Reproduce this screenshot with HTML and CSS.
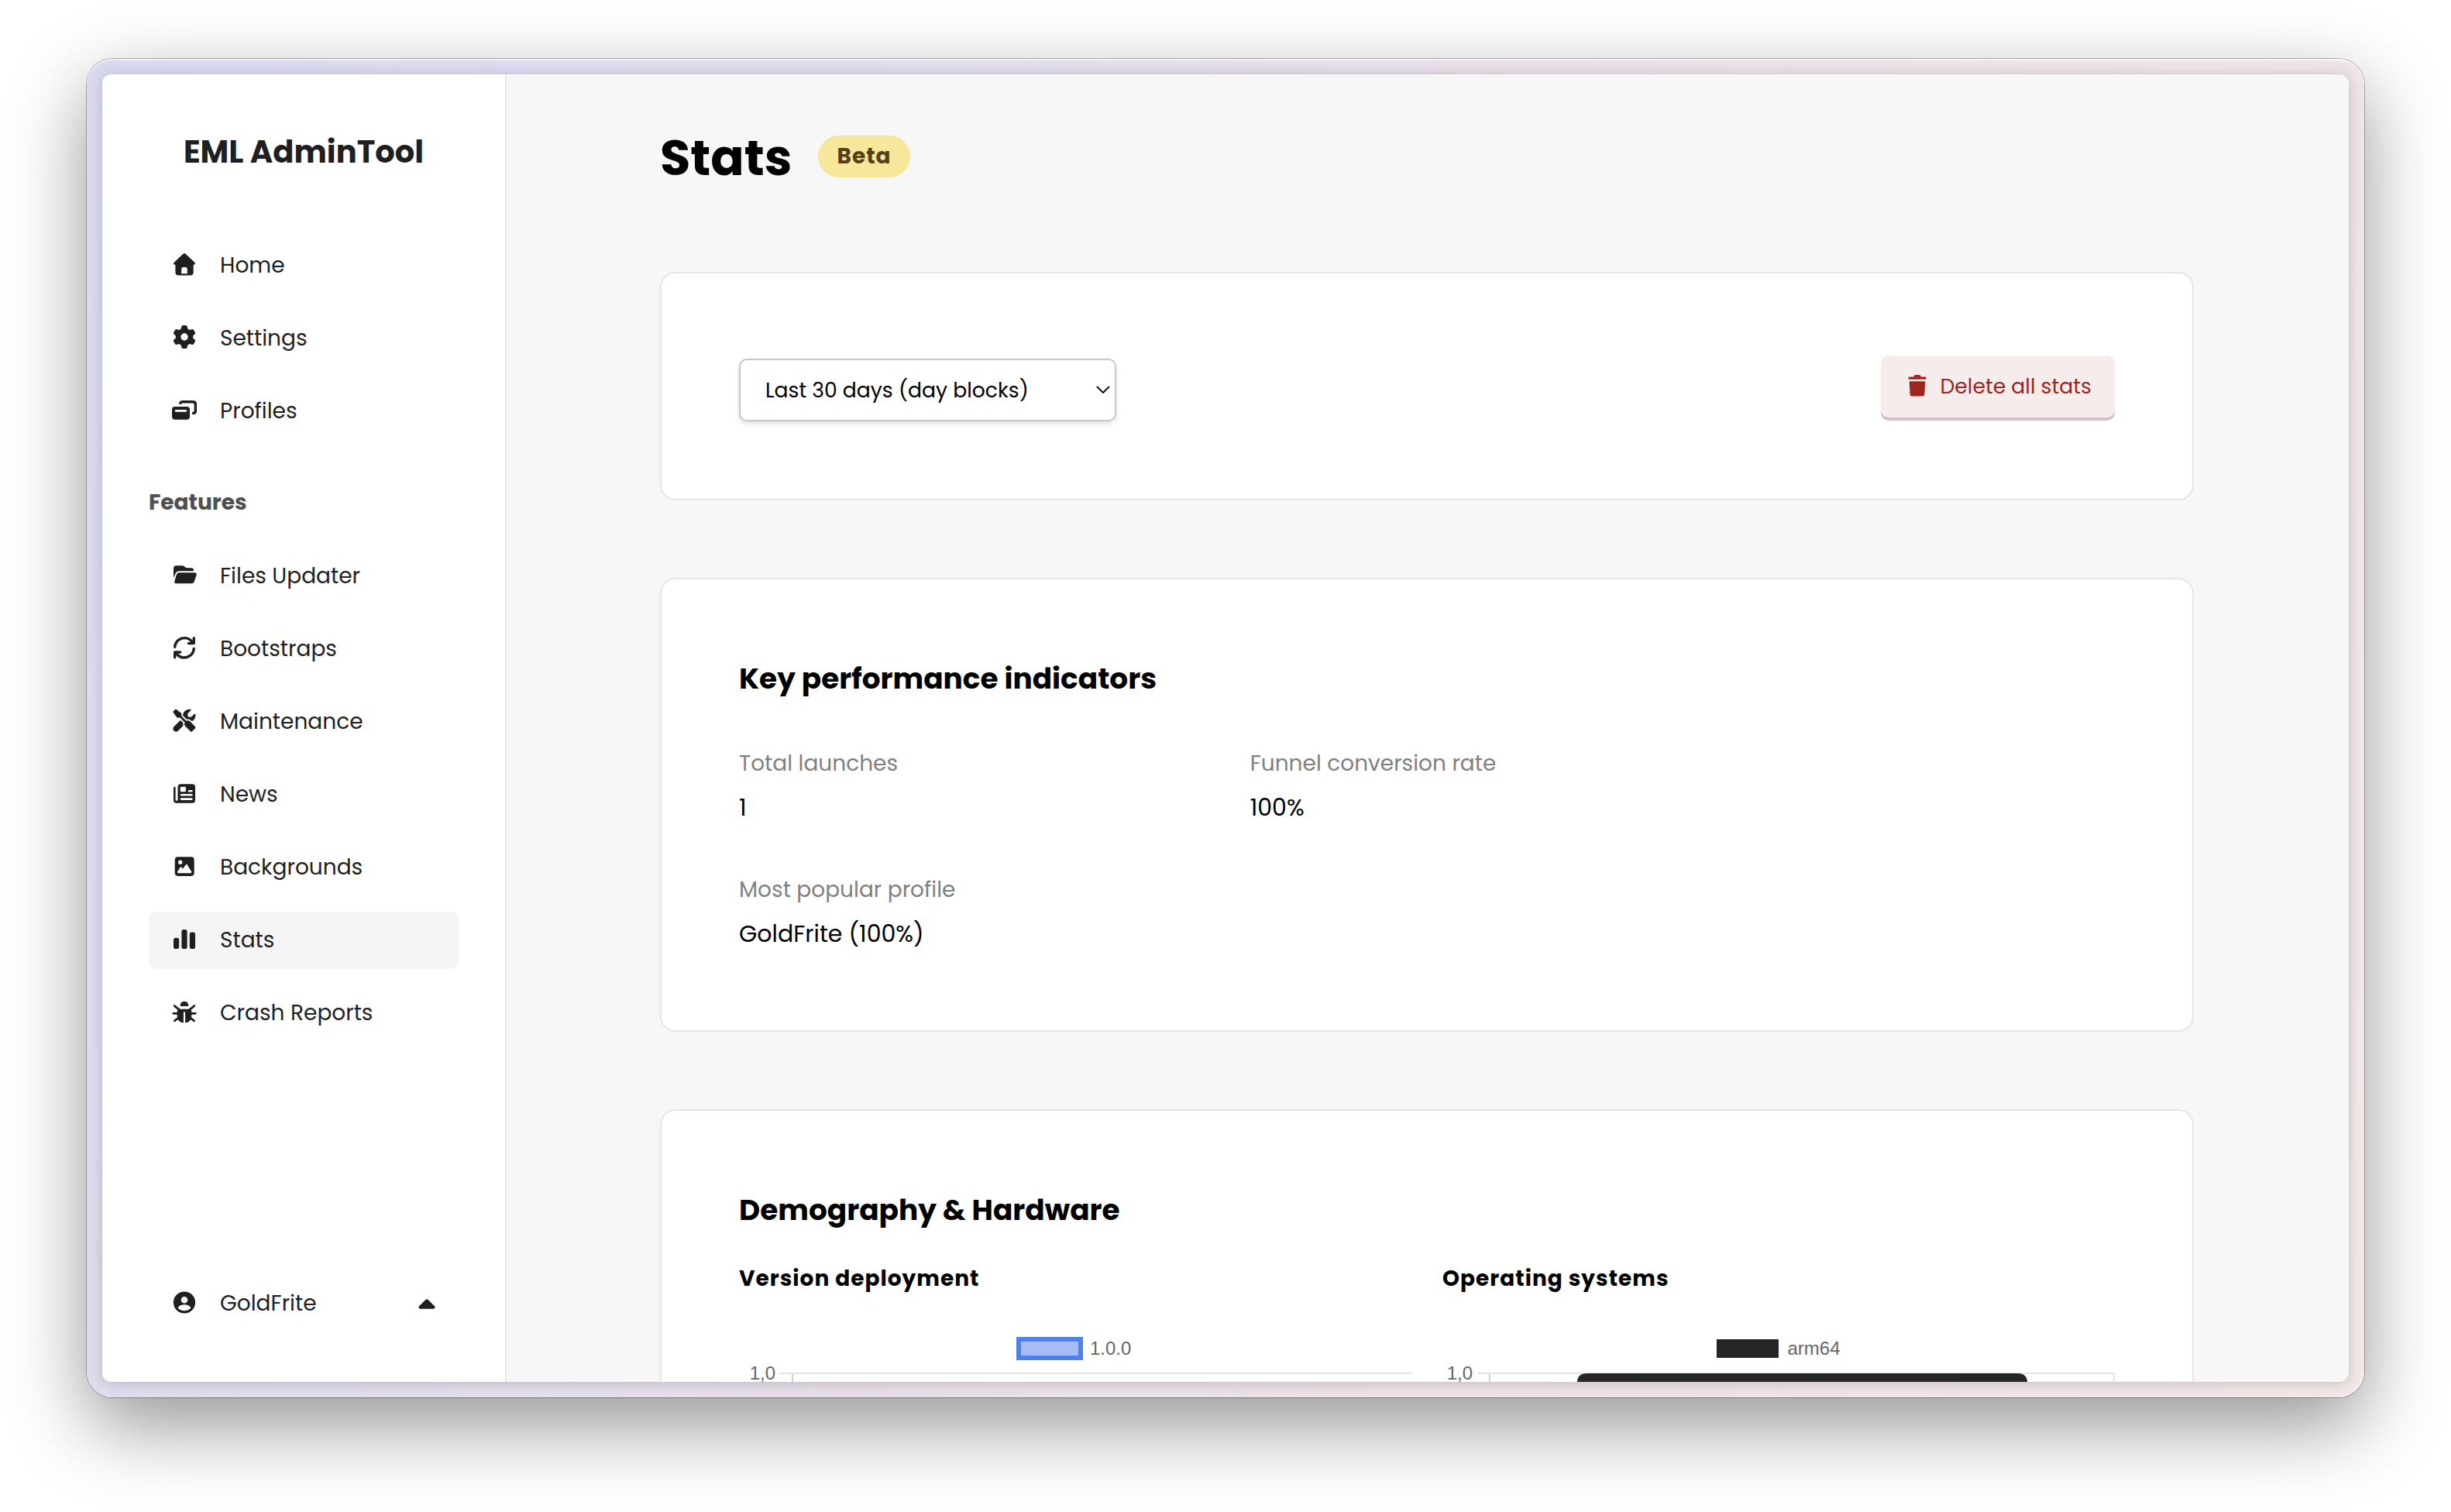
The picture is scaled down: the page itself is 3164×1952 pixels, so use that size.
FILE: index.html
```html
<!DOCTYPE html>
<html lang="en">
<head>
  <meta charset="UTF-8" />
  <meta name="viewport" content="width=device-width, initial-scale=1.0" />
  <title>Stats - EML AdminTool</title>
  <link rel="stylesheet" href="styles.css">
</head>
<body>
  <div class="frame">
    <div class="window">
      <aside class="sidebar">
        <h1 class="brand">EML AdminTool</h1>

        <nav class="nav">
          <a class="nav-item">
            <svg class="icon" viewBox="0 0 32 32"><path fill-rule="evenodd" d="M14.4 2.7Q16 1.3 17.6 2.7L29.5 14Q30.8 15.8 29 16.7H27.7V26.6Q27.7 30.6 23.7 30.6H8.4Q4.4 30.6 4.4 26.6V16.7H3Q1.2 15.8 2.5 14ZM12.2 28.2H19.8V22.4Q19.8 20 17.4 20H14.6Q12.2 20 12.2 22.4Z"/></svg>
            <span>Home</span>
          </a>
          <a class="nav-item">
            <svg class="icon" viewBox="-17 -17 546 546"><path d="M495.9 166.6c3.2 8.7 .5 18.4-6.4 24.6l-43.3 39.4c1.1 8.3 1.7 16.8 1.7 25.4s-.6 17.1-1.7 25.4l43.3 39.4c6.9 6.2 9.6 15.9 6.4 24.6c-4.4 11.9-9.7 23.3-15.8 34.3l-4.7 8.1c-6.6 11-14 21.4-22.1 31.2c-5.9 7.2-15.7 9.6-24.5 6.8l-55.7-17.7c-13.4 10.3-28.2 18.9-44 25.4l-12.5 57.1c-2 9.1-9 16.3-18.2 17.8c-13.8 2.3-28 3.5-42.5 3.5s-28.7-1.2-42.5-3.5c-9.2-1.5-16.2-8.7-18.2-17.8l-12.5-57.1c-15.8-6.5-30.6-15.1-44-25.4L83.1 425.9c-8.8 2.8-18.6 .3-24.5-6.8c-8.1-9.8-15.5-20.2-22.1-31.2l-4.7-8.1c-6.1-11-11.4-22.4-15.8-34.3c-3.2-8.7-.5-18.4 6.4-24.6l43.3-39.4C64.6 273.1 64 264.6 64 256s.6-17.1 1.7-25.4L22.4 191.2c-6.9-6.2-9.6-15.9-6.4-24.6c4.4-11.9 9.7-23.3 15.8-34.3l4.7-8.1c6.6-11 14-21.4 22.1-31.2c5.9-7.2 15.7-9.6 24.5-6.8l55.7 17.7c13.4-10.3 28.2-18.9 44-25.4l12.5-57.1c2-9.1 9-16.3 18.2-17.8C227.3 1.2 241.5 0 256 0s28.7 1.2 42.5 3.5c9.2 1.5 16.2 8.7 18.2 17.8l12.5 57.1c15.8 6.5 30.6 15.1 44 25.4l55.7-17.7c8.8-2.8 18.6-.3 24.5 6.8c8.1 9.8 15.5 20.2 22.1 31.2l4.7 8.1c6.1 11 11.4 22.4 15.8 34.3zM256 336a80 80 0 1 0 0-160 80 80 0 1 0 0 160z"/></svg>
            <span>Settings</span>
          </a>
          <a class="nav-item">
            <svg class="icon" viewBox="0 0 32 32"><path fill-rule="evenodd" d="M4 12H19Q23 12 23 16V24.7Q23 28.7 19 28.7H4Q0 28.7 0 24.7V16Q0 12 4 12ZM5 16Q3.7 16 3.7 17.4T5 18.8H18Q19.3 18.8 19.3 17.4T18 16Z"/><path class="line" d="M10.8 7.4Q11.4 5.8 13.2 5.8H27Q30.4 5.8 30.4 9.2V17Q30.4 20.4 27.4 20.4"/></svg>
            <span>Profiles</span>
          </a>

          <h2 class="nav-title">Features</h2>

          <a class="nav-item">
            <svg class="icon" viewBox="0 0 32 32"><path d="M2 20V7.8Q2 4.3 5.5 4.3H13.2Q15 4.3 16.2 5.4L17.4 6.5Q18.3 7.3 19.6 7.3H25Q28 7.3 28 10.3V11.2H10Q6.2 11.2 4.6 14.4Z"/><path d="M6 15.6Q7 13.3 9.4 13.3H29.4Q32.4 13.4 31.6 16.2L28.8 24.8Q27.8 27.3 25.2 27.3H5.2Q2.4 27.2 3.3 24.4Z"/></svg>
            <span>Files Updater</span>
          </a>
          <a class="nav-item">
            <svg class="icon" viewBox="0 0 32 32"><g class="line"><path d="M3.7 15.2A12.5 12.5 0 0 1 25.2 7.6L28 10.4M28.3 3.8V10.6H21.4"/><path d="M28.3 17.4A12.5 12.5 0 0 1 6.8 25L4 22.2M3.7 28.8V22H10.6"/></g></svg>
            <span>Bootstraps</span>
          </a>
          <a class="nav-item">
            <svg class="icon" viewBox="-25 -29 565 565"><path d="M78.6 5C69.1-2.4 55.6-1.5 47 7L7 47c-8.5 8.5-9.4 22-2.1 31.6l80 104c4.5 5.9 11.6 9.4 19 9.4h54.1l109 109c-14.7 29-10 65.4 14.3 89.6l112 112c12.5 12.5 32.8 12.5 45.3 0l64-64c12.5-12.5 12.5-32.8 0-45.3l-112-112c-24.2-24.2-60.6-29-89.6-14.3l-109-109V104c0-7.5-3.5-14.5-9.4-19L78.6 5zM19.9 396.1C7.2 408.8 0 426.1 0 444.1C0 481.6 30.4 512 67.9 512c18 0 35.3-7.2 48-19.9L233.7 374.3c-7.8-20.9-9-43.6-3.6-65.1l-61.7-61.7L19.9 396.1zM512 144c0-10.5-1.1-20.7-3.2-30.5c-2.4-11.2-16.1-14.1-24.2-6l-63.9 63.9c-3 3-7.1 4.7-11.3 4.7H352c-8.8 0-16-7.2-16-16V102.6c0-4.2 1.7-8.3 4.7-11.3l63.9-63.9c8.1-8.1 5.2-21.8-6-24.2C388.7 1.1 378.5 0 368 0C288.5 0 224 64.5 224 144l0 .8 85.3 85.3c36-9.1 75.8 .5 104 28.7L429 274.5c49-23 83-72.8 83-130.5z"/></svg>
            <span>Maintenance</span>
          </a>
          <a class="nav-item">
            <svg class="icon" viewBox="0 0 32 32"><path fill-rule="evenodd" d="M11.3 4.3H26.2Q30 4.3 30 8.1V24.9Q30 28.7 26.2 28.7H5.6Q2 28.7 2 25.1V9Q2 7.7 3.3 7.7T4.6 9V24.6Q4.6 25.8 6 25.8T7.5 24.6V8.1Q7.5 4.3 11.3 4.3ZM12 7.7Q10.7 7.7 10.7 9V13Q10.7 14.3 12 14.3H16.7Q18 14.3 18 13V9Q18 7.7 16.7 7.7ZM22 12Q20.7 12 20.7 13.3T22 14.6H25.4Q26.7 14.6 26.7 13.3T25.4 12ZM12 17Q10.7 17 10.7 18.3T12 19.6H25.4Q26.7 19.6 26.7 18.3T25.4 17ZM12 22.3Q10.7 22.3 10.7 23.6T12 24.9H25.4Q26.7 24.9 26.7 23.6T25.4 22.3Z"/></svg>
            <span>News</span>
          </a>
          <a class="nav-item">
            <svg class="icon" viewBox="0 0 32 32"><path fill-rule="evenodd" d="M7.5 4.3H24.9Q28.7 4.3 28.7 8.1V25.1Q28.7 28.9 24.9 28.9H7.5Q3.7 28.9 3.7 25.1V8.1Q3.7 4.3 7.5 4.3ZM10.7 8.6A2.7 2.7 0 1 0 10.7 14A2.7 2.7 0 1 0 10.7 8.6ZM7 23.4L10.7 17.6Q11.4 16.8 12.2 17.6L13.9 19.8L17.8 14.4Q18.8 13.3 19.7 14.4L25.2 23.2Q25.6 25 24.2 25.2H8.2Q6.6 25 7 23.4Z"/></svg>
            <span>Backgrounds</span>
          </a>
          <a class="nav-item active">
            <svg class="icon" viewBox="0 0 32 32"><rect x="2" y="14.7" width="7.2" height="14.3" rx="2.8"/><rect x="12.4" y="4" width="7.2" height="25" rx="2.8"/><rect x="22.8" y="7.4" width="7.2" height="21.6" rx="2.8"/></svg>
            <span>Stats</span>
          </a>
          <a class="nav-item">
            <svg class="icon" viewBox="0 0 32 32"><path d="M10.7 9Q10.7 2.7 16 2.7T21.3 9Z"/><path d="M9.6 12.7H22.4Q25.3 12.9 25.3 16V21.5Q25 29.6 17.1 30.6V16.4H14.9V30.6Q7 29.6 6.7 21.5V16Q6.7 12.9 9.6 12.7Z"/><path class="line thin" d="M3.2 8.6L9.5 13.6M28.8 8.6L22.5 13.6M1.8 18.3H8M30.2 18.3H24M3.4 27.8L9 23.6M28.6 27.8L23 23.6"/></svg>
            <span>Crash Reports</span>
          </a>
        </nav>

        <div class="nav-item account">
          <svg class="icon" viewBox="0 0 32 32"><path fill-rule="evenodd" d="M16 2.4A14.1 14.1 0 1 0 16 30.6A14.1 14.1 0 1 0 16 2.4ZM16 9A4.3 4.3 0 1 1 16 17.6A4.3 4.3 0 1 1 16 9ZM7.6 23.4Q10 19.3 16 19.3T24.4 23.4Q21 27.2 16 27.2T7.6 23.4Z"/></svg>
          <span>GoldFrite</span>
          <svg class="caret" viewBox="0 0 22 13"><path d="M9.3 1Q11 -.4 12.7 1L21.2 9.6Q22.4 12.2 19.8 12.7H2.2Q-.4 12.2 .8 9.6Z"/></svg>
        </div>
      </aside>

      <main class="main">
        <header class="page-header">
          <h2 class="page-title">Stats</h2>
          <span class="badge">Beta</span>
        </header>

        <section class="card toolbar">
          <div class="select-wrap">
            <select class="select">
              <option>Last 30 days (day blocks)</option>
            </select>
            <svg class="chevron" viewBox="0 0 18 10"><path d="M1 1L9 9L17 1"/></svg>
          </div>
          <button class="btn-danger">
            <svg class="trash" viewBox="0 0 24 28"><path d="M7.6 1.6Q8.1 0 9.8 0H14.2Q15.9 0 16.4 1.6L16.8 2.6H22.2Q23.6 2.7 23.6 4.2T22.2 5.8H1.8Q.4 5.7 .4 4.2T1.8 2.6H7.2ZM1.7 8.2H22.3L21.4 24.9Q21.1 27.6 18.4 27.6H5.6Q2.9 27.6 2.6 24.9Z"/></svg>
            <span>Delete all stats</span>
          </button>
        </section>

        <section class="card">
          <h3 class="card-title">Key performance indicators</h3>
          <div class="kpis">
            <div class="kpi">
              <p class="kpi-label">Total launches</p>
              <p class="kpi-value">1</p>
            </div>
            <div class="kpi">
              <p class="kpi-label">Funnel conversion rate</p>
              <p class="kpi-value">100%</p>
            </div>
            <div class="kpi kpi-new-row">
              <p class="kpi-label">Most popular profile</p>
              <p class="kpi-value">GoldFrite (100%)</p>
            </div>
          </div>
        </section>

        <section class="card">
          <h3 class="card-title demography">Demography &amp; Hardware</h3>
          <div class="charts">
            <div>
              <h4 class="chart-title">Version deployment</h4>
              <svg class="chart" viewBox="0 0 868 434">
                <rect x="361" y="19" width="80" height="24" fill="#a6bdf6" stroke="#4f81ee" stroke-width="6"/>
                <text x="453" y="39">1.0.0</text>
                <text x="47" y="71" text-anchor="end">1,0</text>
                <path class="grid-x" d="M69 63V400"/>
                <path class="grid-y" d="M52 63H868"/>
              </svg>
            </div>
            <div>
              <h4 class="chart-title">Operating systems</h4>
              <svg class="chart" viewBox="0 0 868 434">
                <rect x="354" y="19" width="80" height="24" fill="#262628"/>
                <text x="445.5" y="39">arm64</text>
                <text x="39" y="71" text-anchor="end">1,0</text>
                <path class="grid-x" d="M61 63V400"/>
                <path class="grid-y" d="M46 63H868M867 63V400"/>
                <path fill="#262628" d="M174 400V75Q174 63 186 63H743Q755 63 755 75V400Z"/>
              </svg>
            </div>
          </div>
        </section>
      </main>
    </div>
  </div>
</body>
</html>
```
FILE: styles.css
```css
* {
  box-sizing: border-box;
}

body {
  margin: 0;
  padding: 76px 112px 148px;
  height: 1952px;
  background: #fff;
  font-family: Poppins, Inter, sans-serif;
  color: #000;
  overflow: hidden;
}

h1, h2, h3, h4, p {
  margin: 0;
}

/* desktop frame around the app */
.frame {
  height: 1728px;
  padding: 20px;
  border-radius: 33px;
  background: linear-gradient(115deg, #d9daf2, #e9e0e9 50%, #f4e8e8);
  box-shadow:
    inset 0 2px 1px rgba(255, 255, 255, 0.6),
    0 0 0 1px rgba(0, 0, 0, 0.28),
    0 36px 100px rgba(0, 0, 0, 0.42);
}

.window {
  display: flex;
  height: 100%;
  border-radius: 12px;
  background: #f7f7f7;
  box-shadow: 0 2px 18px rgba(0, 0, 0, 0.18);
  overflow: hidden;
}

/* sidebar */
.sidebar {
  display: flex;
  flex-direction: column;
  flex-shrink: 0;
  width: 522px;
  padding: 70px 60px 64px;
  background: #fff;
  border-right: 2px solid #e6e6e6;
}

.brand {
  margin-bottom: 80px;
  font-size: 40px;
  line-height: 60px;
  text-align: center;
  color: #1f1f1f;
}

.nav {
  display: flex;
  flex-direction: column;
  gap: 20px;
}

.nav-title {
  margin: 41px 0 18px;
  font-size: 28px;
  line-height: 40px;
  color: #505050;
}

.nav-item {
  display: flex;
  align-items: center;
  gap: 30px;
  height: 74px;
  padding: 0 30px;
  border-radius: 10px;
  font-size: 28px;
  color: #1f1f1f;
}

.nav-item span {
  margin-top: -1px;
}

.nav-item.active {
  background: #f5f5f5;
}

.account {
  margin-top: auto;
}

.icon {
  width: 32px;
  height: 32px;
  margin-top: -4px;
  fill: #1f1f1f;
}

.line {
  fill: none;
  stroke: #1f1f1f;
  stroke-width: 3.4;
  stroke-linecap: round;
  stroke-linejoin: round;
}

.thin {
  stroke-width: 2.8;
}

.caret {
  width: 22px;
  height: 13px;
  margin-left: auto;
  fill: #1f1f1f;
}

/* page */
.main {
  flex-grow: 1;
  padding: 59px 200px 0 198px;
}

.page-header {
  display: flex;
  align-items: center;
  gap: 33px;
  height: 95px;
  margin-bottom: 101px;
}

.page-title {
  margin-top: 2px;
  font-size: 64px;
}

.badge {
  height: 54px;
  margin-top: -1px;
  padding: 0 24px 0 25px;
  border-radius: 27px;
  background: #f7e79b;
  color: #55401a;
  font-size: 28px;
  font-weight: 700;
  letter-spacing: 1px;
  line-height: 54px;
}

.card {
  width: 1980px;
  margin-bottom: 100px;
  padding: 100px 100px 102px;
  border: 2px solid #e6e6e6;
  border-radius: 20px;
  background: #fff;
}

.toolbar {
  display: flex;
  align-items: center;
  justify-content: space-between;
  height: 295px;
  padding: 0 100px;
}

.select-wrap {
  position: relative;
  margin-top: 10px;
}

.select {
  display: block;
  width: 487px;
  height: 81px;
  padding: 0 32px;
  border: 2px solid #c7c7c7;
  border-radius: 10px;
  background: #fff;
  box-shadow: 0 3px 6px rgba(0, 0, 0, 0.12);
  appearance: none;
  font: inherit;
  font-size: 26.67px;
  color: #000;
}

.chevron {
  position: absolute;
  top: 35px;
  right: 8px;
  width: 18px;
  height: 10px;
  fill: none;
  stroke: #111;
  stroke-width: 2;
}

.btn-danger {
  display: flex;
  align-items: center;
  gap: 17.5px;
  width: 302px;
  height: 80px;
  padding: 0 0 0 35px;
  border: none;
  border-radius: 10px;
  background: #f5eceb;
  box-shadow: 0 4px 0 #d4c0c2;
  color: #9d2621;
  font: inherit;
  font-size: 26.67px;
  white-space: nowrap;
}

.trash {
  width: 24px;
  height: 28px;
  margin-top: -2px;
  fill: #9d2621;
}

.card-title {
  margin-bottom: 61px;
  font-size: 37.44px;
  line-height: 56px;
}

.demography {
  margin-bottom: 41px;
}

.kpis {
  display: grid;
  grid-template-columns: repeat(3, 1fr);
  gap: 63px 203px;
}

.kpi-new-row {
  grid-column: 1;
}

.kpi-label {
  margin-bottom: 13px;
  font-size: 28px;
  line-height: 42px;
  color: #808080;
}

.kpi-value {
  font-size: 30px;
  line-height: 45px;
}

.charts {
  display: grid;
  grid-template-columns: 1fr 1fr;
  gap: 40px;
}

.chart-title {
  margin-bottom: 39px;
  font-size: 28px;
  letter-spacing: 1px;
  line-height: 40px;
}

.chart {
  display: block;
  width: 868px;
  height: 434px;
}

.chart text {
  font-family: Helvetica, "Liberation Sans", Arial, sans-serif;
  font-size: 24px;
  fill: #666;
}

.grid-x,
.grid-y {
  fill: none;
  stroke: #e4e4e4;
  stroke-width: 2;
}

.grid-x {
  stroke: #cfcfcf;
}
```
